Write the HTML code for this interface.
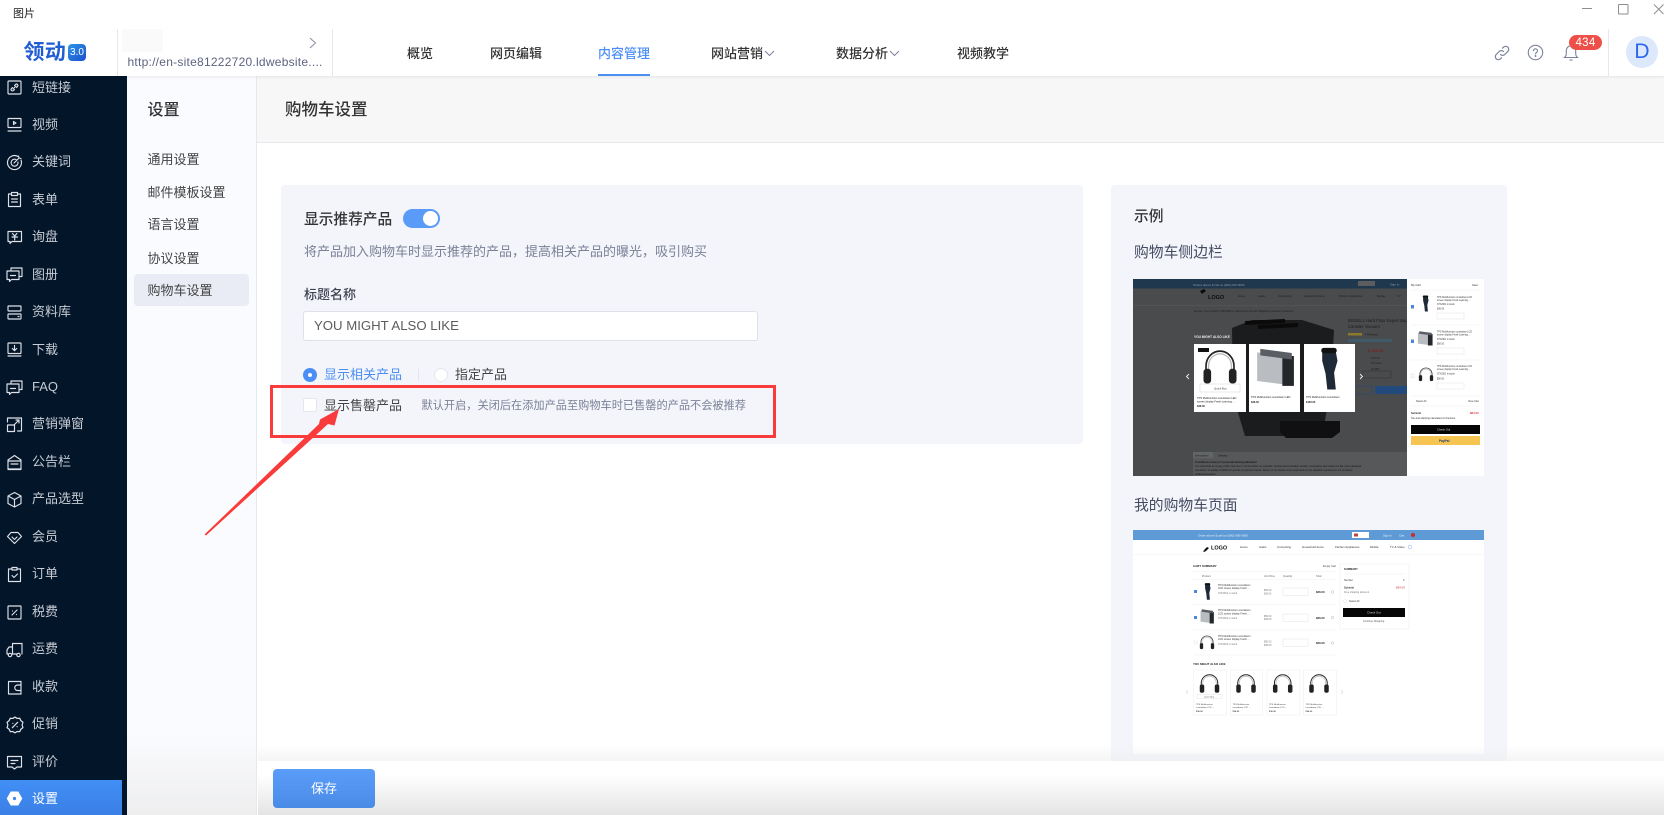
<!DOCTYPE html>
<html lang="zh"><head><meta charset="utf-8"><title>购物车设置</title>
<style>
*{box-sizing:border-box}
html,body{margin:0;padding:0;width:1664px;height:815px;overflow:hidden;background:#fff}
body{position:relative;font-family:"Liberation Sans","Noto Sans CJK SC",sans-serif;color:#333}
.a{position:absolute;white-space:nowrap}
.s{position:absolute;left:32px;height:24px;line-height:24px;font-size:13px;color:#c8ccd4;white-space:nowrap}
.i{position:absolute;left:6px;width:17px;height:17px;fill:none;stroke:#dfe2e8;stroke-width:1.15;stroke-linecap:round;stroke-linejoin:round}
.c{position:absolute;left:147.500px;height:24px;line-height:24px;font-size:13px;color:#444;white-space:nowrap}
.n{position:absolute;top:42px;height:24px;line-height:24px;font-size:13px;font-weight:500;color:#333;white-space:nowrap}
</style></head><body>

<!-- content backgrounds -->
<div class="a" style="left:0;top:76px;width:127px;height:739px;background:#021529"></div>
<div class="a" style="left:127px;top:76px;width:130px;height:739px;background:linear-gradient(#fafbfe,#fafbfe 89%,#eeeeef);border-right:1.5px solid #e7e7f0"></div>
<div class="a" style="left:257px;top:76px;width:1407px;height:67px;background:#f7f7f7;border-bottom:1.5px solid #e8e8ec"></div>
<div class="a" style="left:285px;top:98px;font-size:16.500px;font-weight:500;line-height:24px;color:#333">购物车设置</div>

<!-- header -->
<div class="a" style="left:0;top:0;width:1664px;height:76px;background:#fff;box-shadow:0 1px 3px rgba(0,0,0,.08)"></div>
<div class="a" style="left:13px;top:6px;font-size:11px;line-height:16px;color:#222">图片</div>
<svg class="a" style="left:1575px;top:0" width="89" height="20" fill="none" stroke="#8e8e8e" stroke-width="1">
<path d="M7 8.500H17"/><rect x="43.500" y="4.500" width="9.500" height="9.500" rx=".5"/><path d="M79 4.500l9.500 9.500M88.500 4.500L79 14"/></svg>

<div class="a" style="left:23.500px;top:41px;font-size:21px;letter-spacing:.3px;line-height:24px;font-weight:700;color:#1f5dd2">领动</div>
<div class="a" style="left:68px;top:44px;width:18px;height:17px;border-radius:4px;background:linear-gradient(135deg,#2c95e6,#1c4fcf);color:#fff;font-size:10px;line-height:17px;text-align:center">3.0</div>
<div class="a" style="left:117px;top:29px;width:1px;height:47px;background:#e8e8ec"></div>
<div class="a" style="left:332px;top:29px;width:1px;height:47px;background:#e8e8ec"></div>
<div class="a" style="left:122px;top:29px;width:41px;height:23px;background:#fafafa"></div>
<svg class="a" style="left:308px;top:37px" width="10" height="12" fill="none" stroke="#8a8fa5" stroke-width="1"><path d="M2 1l5.500 5-5.500 5"/></svg>
<div class="a" style="left:127.500px;top:54px;font-size:12px;line-height:17px;color:#5d6380;letter-spacing:.25px">http://en-site81222720.ldwebsite....</div>

<div class="n" style="left:407px">概览</div>
<div class="n" style="left:490px">网页编辑</div>
<div class="n" style="left:598px;color:#4b8ff5">内容管理</div>
<div class="a" style="left:598px;top:74px;width:52px;height:2px;background:#4b8ff5"></div>
<div class="n" style="left:711px">网站营销</div>
<svg class="a" style="left:764px;top:50px" width="11" height="7" fill="none" stroke="#7d83a0"><path d="M1 1l4.500 4.500L10 1"/></svg>
<div class="n" style="left:836px">数据分析</div>
<svg class="a" style="left:889px;top:50px" width="11" height="7" fill="none" stroke="#7d83a0"><path d="M1 1l4.500 4.500L10 1"/></svg>
<div class="n" style="left:957px">视频教学</div>

<svg class="a" style="left:1493px;top:44px" width="18" height="18" fill="none" stroke="#7a819c" stroke-width="1.200" stroke-linecap="round">
<path d="M7.500 10.500a3 3 0 0 0 4.300 0l3-3a3 3 0 0 0-4.300-4.300l-1 1"/><path d="M10.500 7.500a3 3 0 0 0-4.300 0l-3 3a3 3 0 0 0 4.300 4.300l1-1"/></svg>
<svg class="a" style="left:1527px;top:44px" width="17" height="17" fill="none" stroke="#7a819c" stroke-width="1.100"><circle cx="8.500" cy="8.500" r="7.200"/><path d="M6.500 6.700a2 2 0 1 1 3 1.800c-.7.400-1 .8-1 1.500" stroke-linecap="round"/><circle cx="8.500" cy="12" r=".4"/></svg>
<svg class="a" style="left:1563px;top:43px" width="16" height="19" fill="none" stroke="#7a819c" stroke-width="1.100"><path d="M1.500 14.500h13c-1.200-1-1.800-2-1.800-4V7.500a4.700 4.700 0 0 0-9.400 0v3c0 2-.6 3-1.800 4z"/><path d="M6.500 17h3"/></svg>
<div class="a" style="left:1569px;top:35px;width:33px;height:15px;border-radius:8px;background:#ee5049;color:#fff;font-size:11.500px;line-height:16px;text-align:center;letter-spacing:.3px">434</div>
<div class="a" style="left:1608px;top:29px;width:1px;height:47px;background:#e8e8ec"></div>
<div class="a" style="left:1626px;top:36px;width:32px;height:32px;border-radius:50%;background:#dce8fb;color:#2a66ee;font-size:21px;line-height:32px;text-align:center">D</div>

<!-- sidebar -->
<div class="a" style="left:0;top:780px;width:121.500px;height:35px;background:linear-gradient(#418ff6,#3a7fe6)"></div>
<div class="s" style="top:76px">短链接</div>
<div class="s" style="top:112.500px">视频</div>
<div class="s" style="top:150px">关键词</div>
<div class="s" style="top:187.500px">表单</div>
<div class="s" style="top:225px">询盘</div>
<div class="s" style="top:262.500px">图册</div>
<div class="s" style="top:300px">资料库</div>
<div class="s" style="top:337.500px">下载</div>
<div class="s" style="top:375px">FAQ</div>
<div class="s" style="top:412px">营销弹窗</div>
<div class="s" style="top:449.500px">公告栏</div>
<div class="s" style="top:487px">产品选型</div>
<div class="s" style="top:524.500px">会员</div>
<div class="s" style="top:562px">订单</div>
<div class="s" style="top:599.500px">税费</div>
<div class="s" style="top:637px">运费</div>
<div class="s" style="top:674.500px">收款</div>
<div class="s" style="top:712px">促销</div>
<div class="s" style="top:749.500px">评价</div>
<div class="s" style="top:787px;color:#fff">设置</div>

<svg class="i" style="top:79px" viewBox="0 0 17 17"><rect x="2" y="2" width="13" height="13" rx="1"/><path d="M7 10l3-3M6.500 8.500l-1 1a1.400 1.400 0 0 0 2 2l1-1M10.500 8.500l1-1a1.400 1.400 0 0 0-2-2l-1 1"/></svg>
<svg class="i" style="top:116px" viewBox="0 0 17 17"><rect x="2" y="2.500" width="13" height="9" rx=".5"/><path d="M2 15h13"/><path d="M7.500 5.500l2.500 1.500-2.500 1.500z"/></svg>
<svg class="i" style="top:153.500px" viewBox="0 0 17 17"><path d="M12 2.500a7 7 0 1 0 3 3.500"/><path d="M10 5.500a3.500 3.500 0 1 0 2 2.500"/><path d="M8 9l5-5M12.500 2l.5 2 2 .5"/></svg>
<svg class="i" style="top:191px" viewBox="0 0 17 17"><path d="M5.500 3H2.500v12.500h12V3h-3"/><rect x="5.500" y="1.500" width="6" height="3"/><path d="M5.500 8h6M5.500 11h6"/></svg>
<svg class="i" style="top:228.500px" viewBox="0 0 17 17"><path d="M2 2.500h13.500v10H6l-2 2v-2H2z"/><path d="M6.500 4.500l2.200 2.500 2.200-2.500M6 8h5.500M8.700 7v4"/></svg>
<svg class="i" style="top:266px" viewBox="0 0 17 17"><path d="M5 4.500V2h11v8.500h-2"/><path d="M1 5h12v8.500H5.500l-2 2v-2H1z"/><path d="M4.500 9.500h5"/></svg>
<svg class="i" style="top:303.500px" viewBox="0 0 17 17"><rect x="2" y="2" width="13" height="5" rx=".5"/><rect x="2" y="10" width="13" height="5" rx=".5"/><path d="M5 2v0M12 12.500h1"/></svg>
<svg class="i" style="top:341px" viewBox="0 0 17 17"><rect x="2" y="2" width="13" height="10.500" rx=".5"/><path d="M2 15h13M8.500 4.500v5M6.300 7.500l2.200 2.200 2.200-2.200"/></svg>
<svg class="i" style="top:378.500px" viewBox="0 0 17 17"><path d="M5 4.500V2h11v8.500h-2"/><path d="M1 5h12v8.500H5.500l-2 2v-2H1z"/><path d="M4.500 9.500h5"/></svg>
<svg class="i" style="top:416px" viewBox="0 0 17 17"><path d="M1.500 6V2h14v13h-4"/><rect x="1.500" y="9" width="7" height="6.500"/><path d="M8 9l5-5M10 4h3v3M4 2v0"/></svg>
<svg class="i" style="top:453.500px" viewBox="0 0 17 17"><path d="M8.500 1.500L15 6v9H2V6z" /><path d="M2 7h13M5 10h7M2 15.500h13"/></svg>
<svg class="i" style="top:491px" viewBox="0 0 17 17"><path d="M8.500 1.500L15 5v7.500l-6.500 3.500L2 12.500V5z"/><path d="M3 5.500l5.500 3 5.500-3M8.500 8.500V15"/></svg>
<svg class="i" style="top:528.500px" viewBox="0 0 17 17"><path d="M5 3.500h7l3.500 4-7 7-7-7z"/><path d="M6 8l2.500 2.500L11 8"/></svg>
<svg class="i" style="top:566px" viewBox="0 0 17 17"><path d="M5.500 3H2.500v12.500h12V3h-3"/><rect x="6" y="1.500" width="5" height="2.500"/><path d="M6 9.500l2 2 3.500-3.500"/></svg>
<svg class="i" style="top:603.500px" viewBox="0 0 17 17"><rect x="2" y="2" width="13" height="13" rx=".5"/><path d="M6 11l5-5M6.500 7v0M10.500 10.500v0"/></svg>
<svg class="i" style="top:641px" viewBox="0 0 17 17"><path d="M6.500 13h4.500M16 13V2.500H6.500V13M6.500 6H3l-2 3v4h1"/><circle cx="4" cy="14" r="1.700"/><circle cx="12.500" cy="14" r="1.700"/></svg>
<svg class="i" style="top:678.500px" viewBox="0 0 17 17"><path d="M15 2.500H2.500v12.500H15"/><path d="M15 2.500v3.500M15 11.500v3.500"/><path d="M15 6h-3.500a2.700 2.700 0 0 0 0 5.500H15z"/></svg>
<svg class="i" style="top:716px;left:5.500px;width:18px;height:18px" viewBox="0 0 17 17"><path d="M8.500 1l2 1.300 2.500-.2 1 2.300 2 1.500-.8 2.600.8 2.500-2 1.500-1 2.300-2.500-.2-2 1.300-2-1.300-2.500.2-1-2.300-2-1.500.8-2.500L1 5.900l2-1.500 1-2.300 2.500.2z"/><path d="M6 11l5-5M6.500 7v0M10.500 10v0"/></svg>
<svg class="i" style="top:753.500px" viewBox="0 0 17 17"><path d="M1.500 2.500h14v10.500h-4.500l-2.500 2-2.500-2h-4.500z"/><path d="M5 6.500h7M5 9.500h4"/></svg>
<svg class="i" style="top:790px;stroke:none;fill:#fff" viewBox="0 0 17 17"><path d="M4.700 1.500h7.600l4 7-4 7H4.700l-4-7z"/><circle cx="8.500" cy="8.500" r="1.600" fill="#3c85ec"/></svg>

<!-- settings column -->
<div class="a" style="left:134px;top:274px;width:115px;height:32px;background:#e9ecf5;border-radius:4px"></div>
<div class="a" style="left:147.500px;top:99px;font-size:16px;font-weight:500;line-height:24px;color:#333">设置</div>
<div class="c" style="top:148px">通用设置</div>
<div class="c" style="top:180.500px">邮件模板设置</div>
<div class="c" style="top:213px">语言设置</div>
<div class="c" style="top:246.500px">协议设置</div>
<div class="c" style="top:279px">购物车设置</div>

<!-- card 1 -->
<div class="a" style="left:281px;top:185px;width:802px;height:259px;background:#f3f5fb;border-radius:4px"></div>
<div class="a" style="left:304px;top:208px;font-size:14.700px;font-weight:500;line-height:24px;color:#333">显示推荐产品</div>
<div class="a" style="left:403px;top:209px;width:37px;height:19px;border-radius:10px;background:#5b9bf8"></div>
<div class="a" style="left:423px;top:211px;width:15px;height:15px;border-radius:50%;background:#fff"></div>
<div class="a" style="left:304px;top:240px;font-size:13px;line-height:24px;color:#7b8096">将产品加入购物车时显示推荐的产品，提高相关产品的曝光，吸引购买</div>
<div class="a" style="left:304px;top:283px;font-size:13px;font-weight:500;line-height:24px;color:#3f4252">标题名称</div>
<div class="a" style="left:303px;top:311px;width:455px;height:30px;background:#fff;border:1px solid #dfe1e8;border-radius:3px;font-size:13.200px;line-height:28px;padding-left:10px;color:#5c5c5c">YOU MIGHT ALSO LIKE</div>

<div class="a" style="left:303px;top:368px;width:14px;height:14px;border-radius:50%;background:#4b8ff5"></div>
<div class="a" style="left:308px;top:373px;width:4px;height:4px;border-radius:50%;background:#fff"></div>
<div class="a" style="left:324px;top:363px;font-size:13px;line-height:24px;color:#4b8ff5">显示相关产品</div>
<div class="a" style="left:418px;top:369px;width:1px;height:12px;background:#e4e6ee"></div>
<div class="a" style="left:434px;top:368px;width:14px;height:14px;border-radius:50%;background:#fff;border:1px solid #e4e6ee"></div>
<div class="a" style="left:455px;top:363px;font-size:13px;line-height:24px;color:#444">指定产品</div>

<div class="a" style="left:303px;top:398px;width:14px;height:14px;border-radius:2px;background:#fff;border:1px solid #e4e6ee"></div>
<div class="a" style="left:324px;top:394px;font-size:13px;line-height:24px;color:#444">显示售罄产品</div>
<div class="a" style="left:421.500px;top:393.500px;font-size:11.200px;line-height:24px;color:#7b8096">默认开启，关闭后在添加产品至购物车时已售罄的产品不会被推荐</div>

<!-- annotations -->
<div class="a" style="left:270px;top:385px;width:506px;height:53px;border:3px solid #f93b3b"></div>
<svg class="a" style="left:0;top:0" width="1664" height="815"><polygon points="204.500,534.500 319,424 320,419.500 339,409 334.500,425.500 328,424 206,535.500" fill="#f93b3b"/></svg>

<!-- card 2 -->
<div class="a" style="left:1111px;top:185px;width:396px;height:576px;background:#f3f5fb;border-radius:4px 4px 0 0"></div>
<div class="a" style="left:1134px;top:205px;font-size:14.700px;font-weight:500;line-height:24px;color:#333">示例</div>
<div class="a" style="left:1134px;top:240.500px;font-size:14.800px;line-height:24px;color:#444a60">购物车侧边栏</div>
<div class="a" style="left:1134px;top:494px;font-size:14.800px;line-height:24px;color:#444a60">我的购物车页面</div>

<!-- example 1 -->
<svg class="a" style="left:1133px;top:279px;filter:blur(.3px)" width="351" height="197" viewBox="0 0 351 197" font-family="Liberation Sans,sans-serif">
<defs>
<g id="hp"><path d="M-11 4V0a11 11 0 0 1 22 0v4" fill="none" stroke="#222" stroke-width="1.300"/><path d="M-9 4V0a9 9 0 0 1 18 0v4" fill="none" stroke="#bbb" stroke-width="1"/><rect x="-13" y="2" width="6" height="11" rx="2.500" fill="#222"/><rect x="7" y="2" width="6" height="11" rx="2.500" fill="#222"/></g>
<g id="sh"><path d="M-4-14h8l1 7-2 9 1 13h-5l-1-12-2-10z" fill="#1f2a38"/><rect x="-4.500" y="-17" width="9" height="4" rx="1.500" fill="#111"/></g>
<g id="ts"><rect x="-17" y="-11" width="26" height="22" fill="#b9bcc1" transform="skewY(6)"/><rect x="7" y="-10" width="11" height="23" fill="#24272c"/><rect x="-14" y="-14" width="30" height="5" fill="#5a5e64" transform="skewY(6)"/></g>
</defs>
<rect width="274" height="197" fill="#4a4b4d"/>
<rect width="274" height="9.500" fill="#20384e"/>
<rect x="225" y="2" width="17" height="5" fill="#5d5d60"/>
<text x="60" y="7" font-size="3" fill="#8f9aa3">Orders above $ call us (000) 000-0000</text>
<text x="257" y="6.500" font-size="3" fill="#8f9aa3">Sign In</text>
<rect y="26" width="274" height=".5" fill="#5a5b5d"/>
<path d="M67 12l4-2 2 2-4 3z" fill="#0c0c0c"/><text x="75" y="20" font-size="5.500" font-weight="700" fill="#0c0c0c">LOGO</text>
<g font-size="2.800" fill="#1c1c1c"><text x="105" y="18">Home</text><text x="125" y="18">Audio</text><text x="145" y="18">Computing</text><text x="171" y="18">Household Items</text><text x="206" y="18">Kitchen Appliances</text><text x="244" y="18">Mobile</text><text x="264" y="18">TV</text></g>
<text x="61" y="33" font-size="3" fill="#222">Home / Computing / BISSELL Hard Floor Expert Bagless Canister Vacuum</text>
<text x="215" y="43" font-size="4.200" fill="#1c1c1c">BISSELL Hard Floor Expert Bag</text><text x="215" y="49" font-size="4.200" fill="#1c1c1c">Canister Vacuum</text>
<rect x="215" y="54" width="14" height="2.500" fill="#8a7a2c"/><text x="232" y="56.500" font-size="2.800" fill="#1c1c1c">4 Reviews</text>
<rect x="215" y="60" width="44" height="3" fill="#3f5a68"/>
<text x="235" y="73" font-size="4" fill="#7a2320" font-weight="700">$ 250.00</text>
<text x="238" y="80" font-size="2.500" fill="#1c1c1c">1070 W</text><text x="238" y="85" font-size="2.500" fill="#1c1c1c">10 Inches</text><text x="238" y="91" font-size="2.500" fill="#1c1c1c">16 ABS</text>
<rect x="230" y="92" width="28" height="7" fill="none" stroke="#333" stroke-width=".5"/>
<rect x="205" y="107" width="34" height="8" fill="none" stroke="#2a4a6e" stroke-width=".7"/><rect x="242" y="107" width="32" height="8" fill="#234a7c"/>
<path d="M99 49l20-8h50l32 10-3 58-9 48H112l-12-40z" fill="#1b1c1e"/><path d="M112 44l40-2M125 48l40-2" stroke="#0a0a0a" stroke-width="4"/><path d="M147 142h60v11l-8 6h-46l-6-6z" fill="#101012"/>
<text x="61" y="59" font-size="3.200" font-weight="700" fill="#ececec">YOU MIGHT ALSO LIKE</text>
<rect x="61" y="65" width="52" height="68" fill="#fff"/><rect x="116" y="65" width="51" height="68" fill="#fff"/><rect x="171" y="65" width="51" height="68" fill="#fff"/>
<rect x="65" y="69" width="11" height="4" fill="#111"/>
<use href="#hp" transform="translate(87 87) scale(1.270 1.350)"/><use href="#ts" transform="translate(142 90) scale(1.050 1.300)"/><use href="#sh" transform="translate(196 91) scale(1.700 1.300)"/>
<rect x="67" y="105" width="40" height="8" fill="#fff" stroke="#d5d5d5" stroke-width=".5"/><text x="81" y="110.500" font-size="2.800" fill="#444">Quick Buy</text>
<g font-size="2.600" fill="#222"><text x="64" y="120">TPS Multifunction countdown LED</text><text x="64" y="123.500">screen display Fresh-Learning ...</text><text x="64" y="128" font-weight="700">$36.00</text><text x="118" y="119">TPS Multifunction countdown LED</text><text x="118" y="124" font-weight="700">$36.00</text><text x="173" y="119">TPS Multifunction countdown</text><text x="173" y="124" font-weight="700">$100.00</text></g>
<path d="M56 95l-2.500 2.500 2.500 2.500M227 95l2.500 2.500-2.500 2.500" fill="none" stroke="#e6e6e6" stroke-width="1"/>
<rect x="60" y="173" width="214" height="24" fill="#56585a"/><rect x="60" y="173" width="20" height="6" fill="#636668"/>
<g font-size="2.700" fill="#171717"><text x="62" y="177.500">Description</text><text x="85" y="177.500">Delivery</text><text x="62" y="184" font-weight="700">Conditions Luxury in personal driving education</text><text x="62" y="188">It is clear that as a way of life must be in communities so possible. Online discrimination society occupation and make our life more pleasant.</text><text x="62" y="192">reputation of quality of different goods of popular brands. Many of our clients were surprised by the valuable experience our products.</text><text x="62" y="196">additional section</text></g>
<rect x="274" width="77" height="197" fill="#fff"/>
<g font-size="2.800" fill="#222"><text x="278" y="7">My Cart</text><text x="339" y="7">User</text></g>
<path d="M278 11h69M278 46h69M278 81h69M278 117h69M278 127h69" stroke="#efefef" stroke-width=".5"/>
<rect x="278" y="26" width="3" height="3.500" fill="#4b86e0"/><rect x="278" y="60.500" width="3" height="3.500" fill="#4b86e0"/><rect x="278" y="95" width="3" height="3.500" fill="none" stroke="#ccc" stroke-width=".4"/>
<use href="#sh" transform="translate(292.500 25) scale(.6 .5)"/><use href="#ts" transform="translate(292 60) scale(.42 .5)"/><use href="#hp" transform="translate(293 95) scale(.55)"/>
<g font-size="2.300" fill="#333"><text x="304" y="19">TPS Multifunction countdown LCD</text><text x="304" y="22">screen display Fresh-Learning ...</text><text x="304" y="26">37X2301 in stock</text><text x="304" y="30.500">$36.00</text><text x="304" y="53.500">TPS Multifunction countdown LCD</text><text x="304" y="56.500">screen display Fresh-Learning ...</text><text x="304" y="61">37X2301 in stock</text><text x="304" y="65.500">$50.00</text><text x="304" y="88">TPS Multifunction countdown LCD</text><text x="304" y="91">screen display Fresh-Learning ...</text><text x="304" y="95.500">37X2301 in stock</text><text x="304" y="100.500">$50.00</text></g>
<rect x="304" y="34" width="27" height="6" fill="none" stroke="#ddd" stroke-width=".4"/><rect x="304" y="69" width="27" height="6" fill="none" stroke="#ddd" stroke-width=".4"/><rect x="304" y="104" width="27" height="6" fill="none" stroke="#ddd" stroke-width=".4"/>
<g font-size="2.500" fill="#333"><text x="283" y="123">Select All</text><text x="335" y="123">View Cart</text><text x="278" y="135" font-weight="700">Subtotal</text><text x="278" y="140">Tax and shipping calculated at checkout</text></g>
<text x="337" y="135" font-size="2.800" fill="#d8373a" font-weight="700">$84.00</text>
<rect x="278" y="146" width="69" height="9" fill="#050505"/><text x="304" y="151.500" font-size="2.800" fill="#ddd">Check Out</text>
<rect x="278" y="157" width="69" height="9" fill="#f5c451"/><text x="306" y="163" font-size="3.200" font-weight="700" fill="#1e3a78">PayPal</text>
</svg>

<!-- example 2 -->
<svg class="a" style="left:1133px;top:530px;filter:blur(.3px)" width="351" height="224" viewBox="0 0 351 224" font-family="Liberation Sans,sans-serif">
<rect width="351" height="224" fill="#fff"/>
<rect width="351" height="10" fill="#5e9bd6"/>
<text x="65" y="6.500" font-size="3" fill="#e9f1fa">Order above $ call us (000) 000-0000</text>
<rect x="219" y="2" width="17" height="6" fill="#fff"/><rect x="221" y="3.500" width="4" height="3" fill="#bb4444"/>
<g font-size="2.800" fill="#e9f1fa"><text x="250" y="6.500">Sign In</text><text x="266" y="6.500">Cart</text></g><circle cx="280" cy="5" r="2" fill="#c0302c"/>
<path d="M71 20l3-3 2 1-3 3zM70 21l2-1 1 1-2 1z" fill="#111"/>
<text x="78" y="19.500" font-size="5.500" font-weight="700" fill="#111">LOGO</text>
<g font-size="2.900" fill="#333"><text x="107" y="18">Home</text><text x="126" y="18">Audio</text><text x="144" y="18">Computing</text><text x="169" y="18">Household Items</text><text x="202" y="18">Kitchen Appliances</text><text x="237" y="18">Mobile</text><text x="257" y="18">TV &amp; Video</text></g>
<circle cx="277" cy="17" r="1.800" fill="none" stroke="#a8c4e8" stroke-width=".7"/>
<path d="M0 24.500h351" stroke="#f2f2f2" stroke-width=".6"/>
<text x="60" y="37" font-size="2.900" font-weight="700" fill="#222">CART SUMMARY</text><text x="190" y="37" font-size="2.600" fill="#444">Empty Cart</text>
<path d="M60 41.500h143M60 49.500h143M60 74.500h143M60 100h143M60 125h143" stroke="#efefef" stroke-width=".5"/>
<g font-size="2.500" fill="#666"><text x="69" y="47">Product</text><text x="131" y="47">Unit Price</text><text x="150" y="47">Quantity</text><text x="183" y="47">Total</text></g>
<rect x="61" y="60" width="3" height="3" fill="#4b86e0"/><rect x="61" y="86" width="3" height="3" fill="#4b86e0"/><rect x="61" y="111" width="3" height="3" fill="none" stroke="#ddd" stroke-width=".4"/>
<use href="#sh" transform="translate(74.500 62) scale(.6 .52)"/><use href="#ts" transform="translate(74 87) scale(.38 .5)"/><use href="#hp" transform="translate(74 112) scale(.55)"/>
<g font-size="2.500" fill="#333"><text x="85" y="56">TPS Multifunction countdown</text><text x="85" y="59">LCD screen display Fresh ...</text><text x="85" y="64" fill="#777">37X2301 in stock</text><text x="85" y="81">TPS Multifunction countdown</text><text x="85" y="84.500">LCD screen display Fresh ...</text><text x="85" y="89" fill="#777">37X2301 in stock</text><text x="85" y="107">TPS Multifunction countdown</text><text x="85" y="110">LCD screen display Fresh ...</text><text x="85" y="115" fill="#777">37X2301 in stock</text></g>
<g font-size="2.400" fill="#777"><text x="131" y="61">$50.00</text><text x="131" y="64.500">$36.00</text><text x="131" y="87">$50.00</text><text x="131" y="90">$36.00</text><text x="131" y="112.500">$50.00</text><text x="131" y="116">$36.00</text></g>
<rect x="150" y="58" width="25" height="7.500" fill="none" stroke="#e3e3e3" stroke-width=".5"/><rect x="150" y="84" width="25" height="7.500" fill="none" stroke="#e3e3e3" stroke-width=".5"/><rect x="150" y="109" width="25" height="7.500" fill="none" stroke="#e3e3e3" stroke-width=".5"/>
<g font-size="2.800" font-weight="700" fill="#222"><text x="183" y="63">$36.00</text><text x="183" y="89">$36.00</text><text x="183" y="114">$36.00</text></g>
<g fill="none" stroke="#aaa" stroke-width=".4"><circle cx="199.500" cy="62" r="1.300"/><circle cx="199.500" cy="87.500" r="1.300"/><circle cx="199.500" cy="113" r="1.300"/></g>
<rect x="207" y="34" width="69" height="65" fill="#fff" stroke="#f1f1f1" stroke-width=".7"/>
<text x="211" y="40" font-size="2.700" font-weight="700" fill="#222">SUMMARY</text><path d="M210.500 44h62" stroke="#eee" stroke-width=".5"/>
<g font-size="2.500" fill="#333"><text x="211" y="51">Number</text><text x="270" y="51">3</text><text x="211" y="58.500" font-weight="700">Subtotal</text><text x="211" y="63" fill="#777">Free shipping discount</text><text x="216" y="72">Select All</text><text x="230" y="92" fill="#555">Continue Shopping</text></g>
<text x="263" y="58.500" font-size="2.900" fill="#d8373a">$84.00</text>
<circle cx="212" cy="71" r="1.500" fill="none" stroke="#ddd" stroke-width=".4"/>
<rect x="210" y="78" width="62" height="9" fill="#060606"/><text x="234" y="83.500" font-size="2.900" fill="#ddd">Check Out</text>
<text x="60" y="135" font-size="2.900" font-weight="700" fill="#222">YOU MIGHT ALSO LIKE</text>
<g fill="#fff" stroke="#f0f0f0" stroke-width=".6"><rect x="60.500" y="140" width="33" height="45"/><rect x="97.500" y="140" width="32" height="45"/><rect x="134" y="140" width="33" height="45"/><rect x="170.500" y="140" width="33" height="45"/></g>
<use href="#hp" transform="translate(76.500 153) scale(.75)"/><use href="#hp" transform="translate(113 153) scale(.75)"/><use href="#hp" transform="translate(149.700 153) scale(.75)"/><use href="#hp" transform="translate(186 153) scale(.75)"/>
<rect x="64" y="164.500" width="25" height="4" fill="#fff" stroke="#ddd" stroke-width=".4"/><text x="71" y="167.500" font-size="2.200" fill="#555">Quick Buy</text>
<g font-size="2.200" fill="#444"><text x="63" y="175">TPS Multifuncton</text><text x="63" y="178">countdown LCD ...</text><text x="63" y="182" font-weight="700">$36.00</text><text x="99.500" y="175">TPS Multifuncton</text><text x="99.500" y="178">countdown LCD ...</text><text x="99.500" y="182" font-weight="700">$36.00</text><text x="136" y="175">TPS Multifuncton</text><text x="136" y="178">countdown LCD ...</text><text x="136" y="182" font-weight="700">$36.00</text><text x="172.500" y="175">TPS Multifuncton</text><text x="172.500" y="178">countdown LCD ...</text><text x="172.500" y="182" font-weight="700">$36.00</text></g>
<path d="M55 160l-2 2 2 2M208 160l2 2-2 2" fill="none" stroke="#d8d8d8" stroke-width=".6"/>
</svg>

<!-- footer -->
<div class="a" style="left:258px;top:745px;width:1406px;height:16px;background:linear-gradient(rgba(255,255,255,0),rgba(238,238,238,.6))"></div>
<div class="a" style="left:258px;top:761px;width:1406px;height:54px;background:linear-gradient(#fff,#fff 25%,#e4e4e4)"></div>
<div class="a" style="left:273px;top:769px;width:102px;height:39px;border-radius:4px;background:linear-gradient(#5a9df8,#4a8be6);color:#fff;font-size:13px;line-height:39px;text-align:center">保存</div>
</body></html>
